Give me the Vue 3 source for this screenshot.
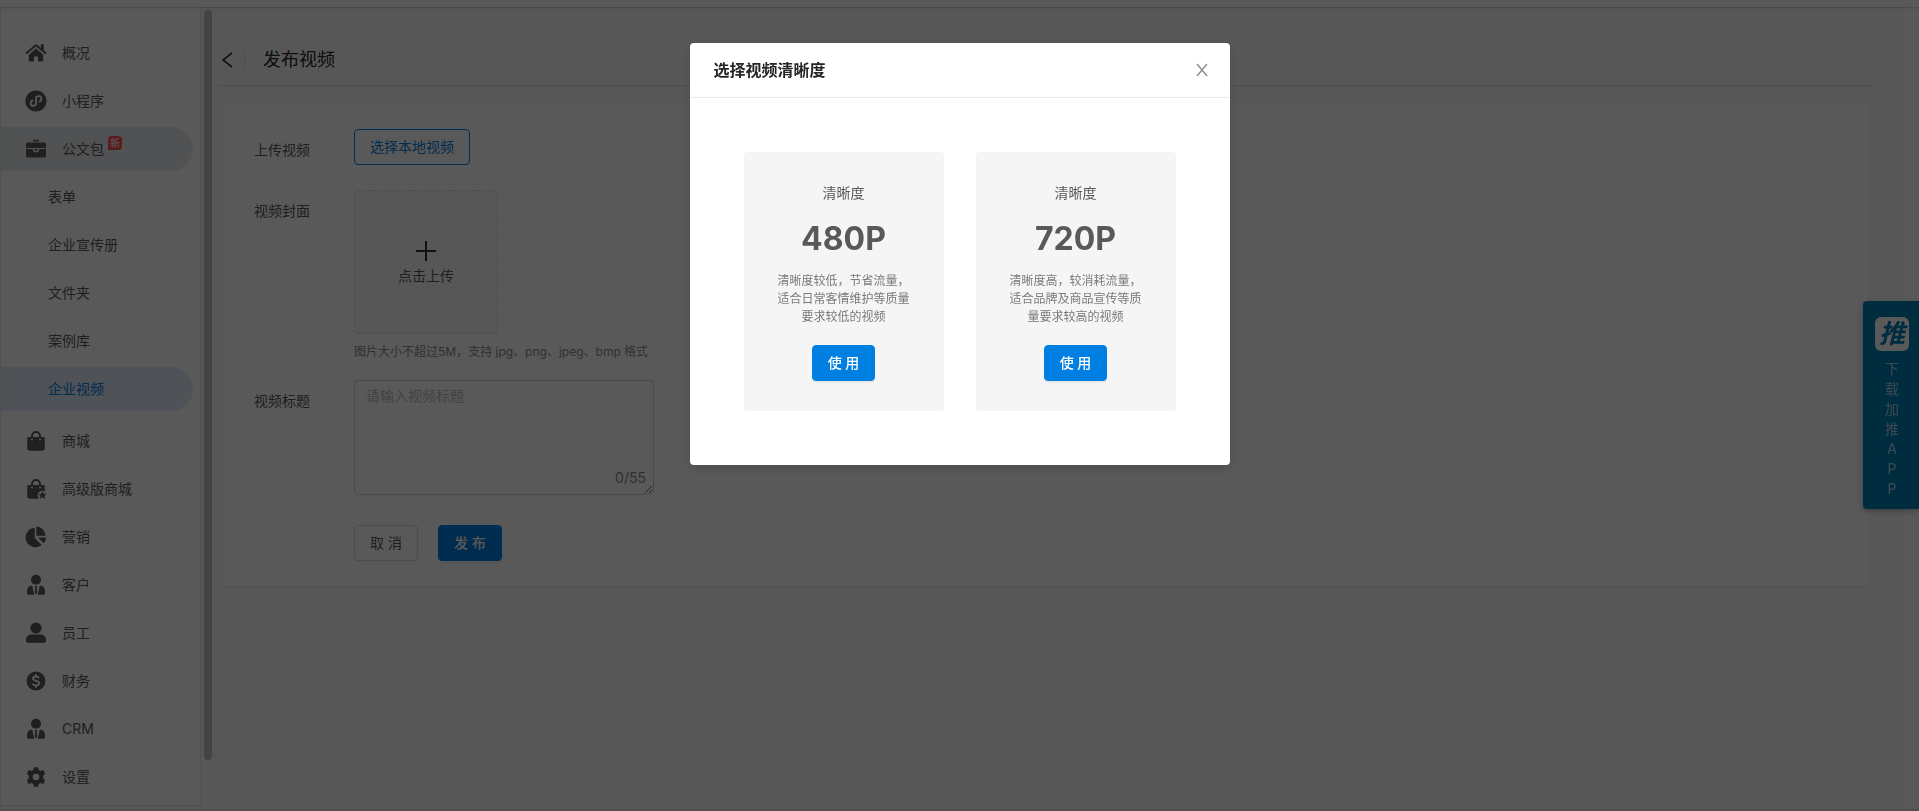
<script setup>
import { reactive } from 'vue';

const menu = [
  { icon: 'home', label: '概况' },
  { icon: 'mini', label: '小程序' },
  {
    icon: 'bag',
    label: '公文包',
    badge: '新',
    children: ['表单', '企业宣传册', '文件夹', '案例库', '企业视频'],
  },
  { icon: 'shop', label: '商城' },
  { icon: 'shopStar', label: '高级版商城' },
  { icon: 'pie', label: '营销' },
  { icon: 'client', label: '客户' },
  { icon: 'staff', label: '员工' },
  { icon: 'money', label: '财务' },
  { icon: 'client', label: 'CRM' },
  { icon: 'gear', label: '设置' },
]

const qualities = [
  { name: '480P', desc: '清晰度较低，节省流量，适合日常客情维护等质量要求较低的视频' },
  { name: '720P', desc: '清晰度高，较消耗流量，适合品牌及商品宣传等质量要求较高的视频' },
]

const appLetters = ['下', '载', '加', '推', 'A', 'P', 'P']

const state = reactive({
  active: '企业视频',
  title: '',
  quality: '',
  modalOpen: true,
})

const choose = (name) => {
  state.quality = name;
  state.modalOpen = false;
}
</script>

<template>
  <div class="page">
    <div class="topbar"></div>
    <div class="body">
      <nav class="sidebar">
        <ul class="menu">
          <li v-for="item in menu" :key="item.label">
            <a href="#" class="menu-item" :class="{ opened: item.children }">
              <svg class="menu-icon" viewBox="0 0 22 22" aria-hidden="true">
                <template v-if="item.icon === 'home'">
                  <path d="M11 6.6 3.8 12.8V18.6a1 1 0 0 0 1 1H9V14.4h4v5.2h4.2a1 1 0 0 0 1-1v-5.8z" />
                  <path d="M1 11.6 10.2 3.7a1.2 1.2 0 0 1 1.6 0L21 11.6" class="line" />
                  <path d="M15.8 2.2h3v6.6l-3-2.6z" />
                </template>
                <template v-else-if="item.icon === 'mini'">
                  <circle cx="11" cy="11" r="10.6" />
                  <path d="M8.3 10.4a2.7 2.7 0 1 0 2.7 3V8.6a2.7 2.7 0 1 1 2.7 3" class="cut" />
                </template>
                <template v-else-if="item.icon === 'bag'">
                  <path d="M8 1.8h6v1.6H8z" />
                  <path d="M2.5 4.6h17A1.5 1.5 0 0 1 21 6.1V10H1V6.1A1.5 1.5 0 0 1 2.5 4.6z" />
                  <path d="M1 11.1h6.7a3.3 3.3 0 0 0 6.6 0H21v7a1.5 1.5 0 0 1-1.5 1.5h-17A1.5 1.5 0 0 1 1 18.1z" />
                  <path d="M9.3 11.1h3.4a1.7 1.7 0 0 1-3.4 0z" />
                </template>
                <template v-else-if="item.icon === 'shop' || item.icon === 'shopStar'">
                  <path d="M7 8V6a4 4 0 0 1 8 0v2" class="line" />
                  <path d="M3.6 7h14.8a1.4 1.4 0 0 1 1.4 1.4v9.4a3 3 0 0 1-3 3H5.2a3 3 0 0 1-3-3V8.4A1.4 1.4 0 0 1 3.6 7z" />
                  <circle cx="7" cy="9.5" r="0.9" class="hole" />
                  <circle cx="15" cy="9.5" r="0.9" class="hole" />
                  <template v-if="item.icon === 'shopStar'">
                    <circle cx="17.5" cy="17.5" r="4.8" class="hole" />
                    <path d="m17.5 13 1.2 2.7 2.9.3-2.2 1.9.7 2.9-2.6-1.5-2.6 1.5.7-2.9-2.2-1.9 2.9-.3z" />
                  </template>
                </template>
                <template v-else-if="item.icon === 'pie'">
                  <path d="M9.7 1.7V12l7 7A9.800 9.800 0 1 1 9.700 1.700z" />
                  <path d="M11.3.6a9.8 9.8 0 0 1 9.4 9.2h-9.4z" />
                  <path d="M13.1 11.6h8.2a9 9 0 0 1-2.8 5.7z" />
                </template>
                <template v-else-if="item.icon === 'client'">
                  <circle cx="11" cy="5.8" r="5" />
                  <path d="M7.2 11.6 9.2 20.8H3.600A1.600 1.600 0 0 1 2 19.200v-2.400a5.200 5.200 0 0 1 5.200-5.200z" />
                  <path d="M14.8 11.6 12.8 20.8h5.600a1.600 1.600 0 0 0 1.600-1.600v-2.400a5.200 5.200 0 0 0-5.200-5.200z" />
                  <path d="M9.600 12h2.800l-.7 1.800.6 4.400-1.300 2.600-1.300-2.600.6-4.400z" />
                </template>
                <template v-else-if="item.icon === 'staff'">
                  <circle cx="11" cy="6" r="5.6" />
                  <path d="M6 12.6h10a5 5 0 0 1 5 5v1.2a2 2 0 0 1-2 2H3a2 2 0 0 1-2-2v-1.2a5 5 0 0 1 5-5z" />
                </template>
                <template v-else-if="item.icon === 'money'">
                  <circle cx="11" cy="11" r="9.4" />
                  <path d="M14 8.100c-.4-1.100-1.500-1.600-3-1.600-1.800 0-3 .8-3 2.100 0 3 6.200 1.500 6.200 4.700 0 1.400-1.400 2.200-3.200 2.200-1.700 0-2.900-.6-3.300-1.900M11 4.200v2.400M11 15.400v2.400" class="cut" />
                </template>
                <template v-else>
                  <path fill-rule="evenodd" d="M9 1.2h4l.8 2.7 1.7 1 2.7-.8 2 3.5L18.300 9.600v2.800l1.900 2-2 3.500-2.700-.8-1.700 1L13 20.800H9l-.8-2.700-1.700-1-2.700.8-2-3.500 1.900-2V9.600L1.800 7.600l2-3.500 2.700.8 1.700-1zM11 7.700a3.300 3.300 0 1 0 0 6.600 3.300 3.300 0 0 0 0-6.600z" />
                </template>
              </svg>
              <span>{{ item.label }}</span>
              <sup v-if="item.badge" class="badge">{{ item.badge }}</sup>
            </a>
            <ul v-if="item.children" class="submenu">
              <li v-for="child in item.children" :key="child">
                <a href="#" class="menu-item sub" :class="{ active: child === state.active }" @click.prevent="state.active = child">{{ child }}</a>
              </li>
            </ul>
          </li>
        </ul>
      </nav>
      <div class="scroll-track"><div class="scroll-thumb"></div></div>

      <main class="main">
        <header class="main-head">
          <button class="back" type="button" aria-label="返回">
            <svg viewBox="0 0 12 16" width="12" height="16"><path d="M11 1 2 8l9 7" /></svg>
          </button>
          <h1>发布视频</h1>
        </header>

        <form class="card" @submit.prevent>
          <div class="row">
            <span class="label">上传视频</span>
            <button class="btn outline" type="button" @click="state.modalOpen = true">选择本地视频</button>
          </div>
          <div class="row cover">
            <span class="label">视频封面</span>
            <div>
              <button class="upload" type="button">
                <svg viewBox="0 0 20 20" width="20" height="20"><path d="M10 0v20M0 10h20" /></svg>
                <span>点击上传</span>
              </button>
              <p class="hint">图片大小不超过5M，支持 jpg、png、jpeg、bmp 格式</p>
            </div>
          </div>
          <div class="row">
            <label class="label" for="video-title">视频标题</label>
            <div class="textarea-wrap">
              <textarea id="video-title" v-model="state.title" maxlength="55" placeholder="请输入视频标题"></textarea>
              <span class="count">{{ state.title.length }}/55</span>
            </div>
          </div>
          <div class="actions">
            <button class="btn" type="button">取 消</button>
            <button class="btn primary" type="submit">发 布</button>
          </div>
        </form>
      </main>
      <div class="page-scroll"></div>
    </div>
    <div class="bottombar"></div>

    <a href="#" class="download">
      <span class="logo">推</span>
      <span v-for="(letter, i) in appLetters" :key="i" class="letter">{{ letter }}</span>
    </a>

    <div v-if="state.modalOpen" class="mask">
      <section class="modal" role="dialog" aria-labelledby="modal-title">
        <header class="modal-head">
          <h2 id="modal-title">选择视频清晰度</h2>
          <button class="close" type="button" aria-label="关闭" @click="state.modalOpen = false">
            <svg viewBox="0 0 12 14" width="12" height="14"><path d="M1 1l10 12M11 1 1 13" /></svg>
          </button>
        </header>
        <div class="modal-body">
          <div v-for="q in qualities" :key="q.name" class="quality">
            <p class="quality-label">清晰度</p>
            <strong>{{ q.name }}</strong>
            <p class="desc">{{ q.desc }}</p>
            <button class="btn primary" type="button" @click="choose(q.name)">使 用</button>
          </div>
        </div>
      </section>
    </div>
  </div>
</template>

<style>
body {
  margin: 0;
  overflow: hidden;
}
</style>

<style scoped>
* {
  box-sizing: border-box;
}

.page {
  display: flex;
  flex-direction: column;
  height: 100vh;
  overflow: hidden;
  background: #fff;
  color: #595959;
  font: 14px/22px Inter, "Noto Sans CJK SC", sans-serif;
}

ul,
p,
h1,
h2 {
  margin: 0;
  padding: 0;
  list-style: none;
}

a {
  color: inherit;
  text-decoration: none;
}

button,
textarea {
  font: inherit;
  color: inherit;
}

.topbar {
  flex: none;
  height: 7px;
  background: #fff;
  box-shadow: 0 1px 2px rgba(0, 0, 0, .2);
  z-index: 1;
}

.body {
  display: flex;
  flex: 1;
  min-height: 0;
}

.bottombar {
  flex: none;
  height: 5px;
  border-bottom: 2px solid #e6dfe2;
  background: #fafafa;
}

.sidebar {
  flex: none;
  width: 201px;
  padding-top: 24px;
  border-left: 1px solid #e8e8e8;
  border-right: 1px solid #e8e8e8;
  border-bottom: 1px solid #dcdcdc;
}

.menu-item {
  display: flex;
  align-items: center;
  width: 192px;
  height: 44px;
  margin-bottom: 4px;
  padding-left: 24px;
  border-radius: 0 22px 22px 0;
}

.menu-item.opened {
  background: #e6ebf0;
}

.menu-item.sub {
  padding-left: 47px;
}

.menu-item.active {
  background: #e1ebf7;
  color: #007fe3;
}

.submenu {
  padding-bottom: 4px;
}

.menu-icon {
  width: 22px;
  height: 22px;
  margin-right: 15px;
  fill: #595959;
}

.menu-icon .line {
  fill: none;
  stroke: #595959;
  stroke-width: 2;
}

.menu-icon .cut {
  fill: none;
  stroke: #fff;
  stroke-width: 1.8;
}

.menu-icon .hole {
  fill: #fff;
}

.badge {
  align-self: flex-start;
  width: 14px;
  height: 14px;
  margin: 9px 0 0 4px;
  border-radius: 4px 4px 4px 0;
  background: #ff4d4f;
  color: #fff;
  font-size: 10px;
  line-height: 14px;
  text-align: center;
}

.scroll-track {
  flex: none;
  width: 14px;
  padding: 3px 2px 46px 3px;
  border-right: 1px solid #ededed;
  background: #fafafa;
}

.scroll-thumb {
  width: 8px;
  height: 100%;
  border-radius: 4px;
  background: #c1c1c1;
}

.main {
  flex: 1;
  min-width: 0;
  padding: 0 31px 0 3px;
  background: #fafafa;
}

.main-head {
  display: flex;
  align-items: center;
  height: 79px;
  padding: 27px 0 0 3px;
  border-bottom: 1px solid #dcdcdc;
}

.back {
  display: flex;
  padding: 1px 11px 1px 0;
  border: 0;
  border-right: 1px solid #dcdcdc;
  background: none;
}

.back path {
  fill: none;
  stroke: #333;
  stroke-width: 1.6;
}

h1 {
  margin-left: 18px;
  color: #262626;
  font-size: 18px;
  font-weight: 400;
  line-height: 26px;
}

.card {
  margin: 20px 4px 0;
  padding: 23px 32px 25px;
  border-radius: 4px;
  background: #fff;
  box-shadow: 0 1px 2px rgba(0, 0, 0, .08);
}

.row {
  display: flex;
  align-items: flex-start;
  margin-bottom: 25px;
}

.row.cover {
  margin-bottom: 18px;
}

.label {
  width: 100px;
  padding-top: 10px;
}

.btn {
  height: 36px;
  padding: 0 15px;
  border: 1px solid #d9d9d9;
  border-radius: 4px;
  background: #fff;
  line-height: 22px;
}

.btn.outline {
  border-color: #007fe3;
  color: #007fe3;
}

.btn.primary {
  border-color: #007fe3;
  background: #007fe3;
  color: #fff;
  font-weight: 500;
  box-shadow: 0 2px 2px rgba(0, 0, 0, .05);
}

.upload {
  display: flex;
  flex-direction: column;
  align-items: center;
  justify-content: center;
  gap: 4px;
  width: 144px;
  height: 144px;
  padding: 4px 0 0;
  border: 1px dashed #d9d9d9;
  border-radius: 4px;
  background: #fafafa;
}

.upload path {
  stroke: #333;
  stroke-width: 2;
}

.hint {
  padding-top: 8px;
  color: #8c8c8c;
  font-size: 12px;
  line-height: 20px;
}

.textarea-wrap {
  position: relative;
  width: 300px;
}

textarea {
  display: block;
  width: 100%;
  height: 115px;
  padding: 4px 11px;
  border: 1px solid #d0d0d0;
  border-radius: 4px;
  background: #fff;
  outline: 0;
  resize: vertical;
}

textarea::placeholder {
  color: #bfbfbf;
}

.count {
  position: absolute;
  right: 8px;
  bottom: 6px;
  color: #8c8c8c;
}

.actions {
  display: flex;
  gap: 20px;
  padding: 5px 0 0 100px;
}

.page-scroll {
  flex: none;
  width: 15px;
  background: #fff;
}

.download {
  position: fixed;
  top: 301px;
  right: 0;
  display: flex;
  flex-direction: column;
  align-items: center;
  width: 56px;
  height: 208px;
  padding: 16px 10px 0 12px;
  border-radius: 4px 0 0 4px;
  background: #007fb5;
  box-shadow: 0 2px 6px rgba(0, 0, 0, .3);
  color: #a6d3e6;
}

.logo {
  width: 34px;
  height: 34px;
  margin-bottom: 8px;
  border-radius: 6px;
  background: #fff;
  color: #007fb5;
  font-size: 26px;
  font-style: italic;
  font-weight: 700;
  line-height: 34px;
  text-align: center;
}

.letter {
  line-height: 20px;
}

.mask {
  position: fixed;
  inset: 0;
  z-index: 10;
  display: flex;
  justify-content: center;
  align-items: flex-start;
  padding-top: 43px;
  background: rgba(0, 0, 0, .65);
}

.modal {
  width: 540px;
  border-radius: 4px;
  background: #fff;
  box-shadow: 0 4px 12px rgba(0, 0, 0, .15);
}

.modal-head {
  display: flex;
  align-items: center;
  justify-content: space-between;
  height: 55px;
  padding: 0 22px 0 24px;
  border-bottom: 1px solid #e8e8e8;
}

h2 {
  color: #262626;
  font-size: 16px;
  font-weight: 600;
}

.close {
  display: flex;
  padding: 0;
  border: 0;
  background: none;
}

.close path {
  fill: none;
  stroke: #8c8c8c;
  stroke-width: 1.4;
}

.modal-body {
  display: flex;
  gap: 32px;
  padding: 54px;
}

.quality {
  display: flex;
  flex: 1;
  flex-direction: column;
  align-items: center;
  padding: 30px 34px;
  border-radius: 4px;
  background: #f5f5f5;
  text-align: center;
}

.quality strong {
  margin: 14px 0 12px;
  font-size: 32px;
  font-weight: 700;
  line-height: 42px;
}

.desc {
  margin-bottom: 19px;
  color: #7a7a7a;
  font-size: 12px;
  line-height: 18px;
}
</style>
